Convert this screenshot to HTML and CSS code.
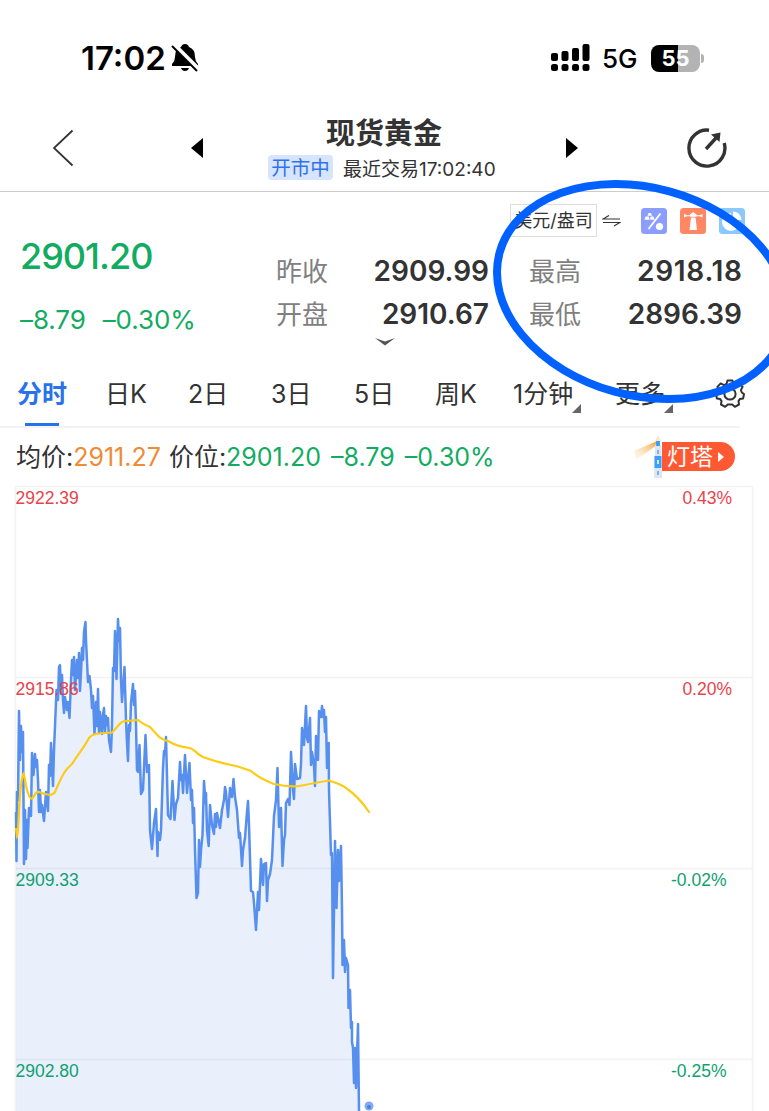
FILE: index.html
```html
<!DOCTYPE html>
<html lang="zh-CN">
<head>
    <meta charset="UTF-8">
    <meta name="viewport" content="width=device-width, initial-scale=1.0">
    <title>现货黄金</title>
    <link rel="stylesheet" href="styles.css">
</head>
<body>
    <div class="status">
        <span class="clock">17:02</span>
        <svg class="bell" width="28" height="30" viewBox="0 0 28 30">
            <path d="M10 4Q11 1 14 1t4 3q6 2 6 10 0 4 3 7v2H1v-2q3-3 3-7 0-8 6-10z"/>
            <path d="M10 25h8q-1 3-4 3t-4-3z"/>
            <path d="M2 1l26 26" stroke="#fff" stroke-width="5"/>
            <path d="M1 3l25 25" stroke="#000" stroke-width="2"/>
        </svg>
        <svg class="signal" width="39" height="28" viewBox="0 0 39 28">
            <rect x="0" y="9" width="7" height="8" rx="2"/>
            <rect x="10.500" y="7" width="7" height="10" rx="2"/>
            <rect x="21" y="4" width="7" height="13" rx="2"/>
            <rect x="31.500" y="0" width="7" height="17" rx="2"/>
            <rect x="0" y="20" width="7" height="7" rx="2.500"/>
            <rect x="10.500" y="20" width="7" height="7" rx="2.500"/>
            <rect x="21" y="20" width="7" height="7" rx="2.500"/>
            <rect x="31.500" y="20" width="7" height="7" rx="2.500"/>
        </svg>
        <span class="network">5G</span>
        <span class="battery">55</span>
        <span class="battery-tip"></span>
    </div>

    <header>
        <svg class="back" width="22" height="38" viewBox="0 0 22 38"><path d="M19.500 1.500L1 19l18.500 17.500" fill="none" stroke="#333" stroke-width="1.800"/></svg>
        <svg class="prev" width="12" height="20" viewBox="0 0 12 20"><path d="M12 0v20L0 10z"/></svg>
        <div class="heading">
            <h1>现货黄金</h1>
            <p><span class="badge">开市中</span><span class="last">最近交易17:02:40</span></p>
        </div>
        <svg class="next" width="12" height="20" viewBox="0 0 12 20"><path d="M0 0v20l12-10z"/></svg>
        <svg class="refresh" width="40" height="40" viewBox="0 0 40 40">
            <path d="M22 2.200A18 18 0 1 0 37.200 15" fill="none" stroke="#333" stroke-width="3.400"/>
            <path d="M19 21L29 10" stroke="#333" stroke-width="3.400"/>
            <path d="M24 6.500L33.500 4.500 32.500 14z" fill="#333"/>
        </svg>
    </header>

    <section class="quote">
        <div class="tools">
            <span class="unit">美元/盎司</span>
            <svg class="swap" width="19" height="12" viewBox="0 0 19 12"><path d="M18 4H1l6-3.500M1 7.500h17l-6 3.500" fill="none" stroke="#333" stroke-width="1.200"/></svg>
            <svg class="tool" width="26" height="26" viewBox="0 0 26 26">
                <rect width="26" height="26" rx="3.500" fill="#8b9eff"/>
                <path d="M7.500 21L19.500 5.500" stroke="#fff" stroke-width="1.800"/>
                <circle cx="18.500" cy="18.500" r="3.600" fill="#fff"/>
                <path d="M7.500 5h2.500l1 2.800H6.500zM4.500 8.600h3.400l.8 3.200H3.500zM9.500 8.600h3l1 3.200H9.300z" fill="#fff"/>
            </svg>
            <svg class="tool" width="26" height="26" viewBox="0 0 26 26">
                <rect width="26" height="26" rx="3.500" fill="#ff8763"/>
                <path d="M11 9.500h4.500l1.500 12.500H9.500zM10 6.500l3.200-2.500 3.300 2.500v2.200H10zM4 6v3.500l3-1.300h3V7.300H7zM22.500 6v3.500l-3-1.300h-3v-.9h3z" fill="#fff"/>
            </svg>
            <svg class="tool" width="26" height="26" viewBox="0 0 26 26">
                <rect width="26" height="26" rx="3.500" fill="#8bc8fc"/>
                <path d="M12 5v9h9a9 9 0 1 1-9-9z" fill="#fff"/>
                <path d="M14 3.500a8.500 8.500 0 0 1 8.500 8.500H14z" fill="#fff"/>
            </svg>
        </div>
        <div class="figures">
            <div class="price">
                <strong>2901.20</strong>
                <p><span>–8.79</span><span>–0.30%</span></p>
            </div>
            <dl>
                <dt>昨收</dt><dd>2909.99</dd>
                <dt>开盘</dt><dd>2910.67</dd>
            </dl>
            <dl>
                <dt>最高</dt><dd class="high">2918.18</dd>
                <dt>最低</dt><dd>2896.39</dd>
            </dl>
        </div>
        <svg class="expand" width="20" height="8" viewBox="0 0 20 8"><path d="M0 0l10 3.500L20 0 10 7.500z" fill="#555"/></svg>
    </section>

    <nav>
        <span class="active">分时</span>
        <span>日K</span>
        <span>2日</span>
        <span>3日</span>
        <span>5日</span>
        <span>周K</span>
        <span class="drop">1分钟</span>
        <span class="drop">更多</span>
        <svg class="gear" width="30" height="30" viewBox="0 0 30 30" fill="none" stroke="#333" stroke-width="2" stroke-linejoin="round">
            <path d="M12.500 1.500h5l1 3.500 2.500 1.100 3.300-1.700 3.300 3.500-1.700 3.200.9 2.400 2.200 1.500-.9 4.500-3.300.6-1.300 2 .5 3.400-4.200 2.300-2.600-2.300h-4.400l-2.600 2.300L6 25.500l.5-3.400-1.300-2-3.300-.6-.9-4.500 2.200-1.500.9-2.400-1.700-3.200 3.300-3.500L9 6.100 11.500 5z"/>
            <circle cx="15" cy="15" r="5.600"/>
        </svg>
    </nav>

    <div class="legend">
        <span>均价:</span><span class="orange">2911.27</span>
        <span class="label">价位:</span><span class="green">2901.20 –8.79 –0.30%</span>
        <div class="beacon">
            <svg width="28" height="44" viewBox="0 0 28 44">
                <defs>
                    <linearGradient id="beam" x1="1" y1="0" x2="0" y2="1">
                        <stop offset="0" stop-color="#f2a13a"/>
                        <stop offset="1" stop-color="#fff0dc" stop-opacity=".3"/>
                    </linearGradient>
                </defs>
                <path d="M23 6v4L2 25 0 16z" fill="url(#beam)"/>
                <path d="M24 0l3 6h-6z" fill="#fbe7c5"/>
                <path d="M21 10h6l1 33h-8z" fill="#dfe5f3"/>
                <path d="M22 6h4v5h-4zM20.500 21h7v12h-7z" fill="#3d9ff5"/>
                <path d="M24 15v4M24 36v4" stroke="#55a8ee" stroke-width="1.500"/>
                <path d="M24 25v4" stroke="#fff" stroke-width="1.500"/>
            </svg>
            <span class="pill">灯塔<svg width="6" height="10" viewBox="0 0 6 10"><path d="M0 0l6 5-6 5z" fill="#fff"/></svg></span>
        </div>
    </div>

    <svg class="chart" width="769" height="626" viewBox="0 485 769 626">
        <path class="area" d=""/>
        <g class="grid">
            <path d="M15.500 1111V486.500H752.500V1111"/>
            <path d="M16 677.500H752M16 868.500H752M16 1059.500H752"/>
        </g>
        <polyline class="line" points=""/>
        <g class="up">
            <text x="15.500" y="503.500">2922.39</text>
            <text x="15.500" y="694.500">2915.86</text>
            <text x="732" y="503.500" text-anchor="end">0.43%</text>
            <text x="732" y="694.500" text-anchor="end">0.20%</text>
        </g>
        <g class="down">
            <text x="15.500" y="885.500">2909.33</text>
            <text x="15.500" y="1076.500">2902.80</text>
            <text x="726.500" y="885.500" text-anchor="end">-0.02%</text>
            <text x="726.500" y="1076.500" text-anchor="end">-0.25%</text>
        </g>
        <path class="average" d="M16 829L17 836Q18 834 19 810C20 792 21 778 23.500 774Q25 778 26 786Q29 799 32 799C35 796 35 791 39 792Q43 794 50 795Q54 794 55 792C63 773 66 769 72 764C80 751 84 748 89 738Q92 734 99 733.500L112 732.500C118 727 120 720 128 721L138 720Q144 725 150 727C157 734 160 740 168 741Q178 747 190 748C196 750 196 754 203 757Q219 763 238 766.500L251 771Q260 779 274 784Q291 788 302 785.500Q320 782 329 780.500C336 783 341 784 346 788Q359 797 369 812"/>
        <circle cx="369" cy="1106" r="4.500" fill="#82aaf0"/>
        <circle cx="369" cy="1107" r="2" fill="#4583e8"/>
    </svg>

    <svg class="marker" width="769" height="420" viewBox="0 0 769 420">
        <ellipse cx="642" cy="291.500" rx="147.600" ry="103.900" transform="rotate(15.300 642 291.500)"/>
    </svg>

    <script>
        // Intraday prices as chart coordinates
        const points = `16,812 16.500,861 17,792 18,800 19,711 20,760 21,726 22,752 23,732 24,864 25,810 26,859
            27,820 27.500,848 29,808 31,816 32,753 33.500,775 35,754 36,767 37,760 38,780 39,812 40,790 41,812
            42,805 44,821 46,792 48,811 49,765 50,776 51,743 53,786 54,750 55,726 56.500,690 58,700 59,667
            60,665 61,694 62,675 63,700 64,713 65,697 67,710 68,702 69.500,718 71,680 72,660 73,675 74,657
            75,690 77,660 78,678 79,653 80,691 81,672 82,648 83,660 84,632 85.500,622 86,640 88,682 89.500,676
            91,690 92,708 93,696 94.500,734 96,702 97,726 98,689 99,733 100,712 102,734 103,715 104,708
            105,732 106,716 107,725 108,718 109,740 111,752 112,725 113,668 114,671 115,631 116.500,679
            118,619 119,641 120,628 121,680 122,702 124.500,667 126,720 127,743 128,761 129,725 130,731
            131,703 133,684 134,705 135,691 136,725 137,770 138,772 139.500,745 141,794 143,790 145.500,735
            147,772 149,765 150,830 152,849 154,823 156,809 157.500,856 158,832 160,840 161,830 163,768 164,751
            165,754 166,737 168,815 170.500,819 172.500,781 174.500,820 176,804 178,798 180,762 181,780 182,775
            183,793 185,755 187,793 189.500,763 191,800 192,790 193,823 194,808 195,850 196.500,898 198,893
            199,840 200,867 201,850 202.500,835 204,781 205.500,803 206,793 207,830 208.700,846 210,805
            212,825 214,834 215,814 216,827 217,813 220,828 222,810 224,800 225,787 226,792 228,817 230,788
            232,797 233.500,779 235,797 237,810 239,838 240,833 242,866 243,850 245,838 247,812 248,801
            249,825 251,891 253,892 254,903 256,930 258,892 259,910 261,859 263,885 264,864 266,863 267,901
            268,880 270,874 272,860 274,816 276,800 277.500,768 279,827 281,808 282.500,866 284,840 285,835
            286,803 288,799 289.500,805 291,752 293,790 294,799 295,764 297,779 300,778 301,764 302,728
            304,745 306,706 307,738 308,742 310,718 311,765 312,752 314,766 315,786 316,736 318,760 319,711
            321,717 322,706 323,717 324,710 325,732 326,717 327,768 328.700,743 329,790 331,855 332,853
            333,978 335,841 336.500,908 338,850 339,881 341,846 342,910 342.500,965 344,940 345,972 346,958
            348,965 348.500,1008 350,990 351,1028 352,1022 352,1042 353,1048 354,1083 355,1048 356,1088
            358,1024 359,1111`.trim().split(/\s+/);

        document.querySelector('.line').setAttribute('points', points.join(' '));
        document.querySelector('.area').setAttribute('d', 'M16 1111L' + points.join('L') + 'Z');
    </script>
</body>
</html>
```
FILE: styles.css
```css
* {
    box-sizing: border-box;
}
body {
    position: relative;
    width: 769px;
    height: 1111px;
    margin: 0;
    overflow: hidden;
    background-color: #fff;
    color: #333;
    font-family: Inter, "Noto Sans CJK SC", sans-serif;
}
h1, p, dl, dd {
    margin: 0;
}
span {
    white-space: nowrap;
}
svg {
    display: block;
    flex: none;
}
.status {
    display: flex;
    align-items: center;
    height: 116px;
    padding-left: 81px;
    color: #000;
}
.clock {
    width: 90px;
    font-size: 33px;
    font-weight: 600;
}
.signal {
    margin-left: 352px;
}
.network {
    width: 49px;
    margin-left: 12px;
    font-size: 26px;
    font-weight: 500;
}
.battery {
    width: 49px;
    height: 27px;
    border-radius: 8px;
    background: linear-gradient(90deg, #000 55%, #b3b3b3 55%);
    color: #fff;
    font-size: 22px;
    font-weight: 700;
    line-height: 27px;
    text-align: center;
}
.battery-tip {
    width: 3px;
    height: 9px;
    margin-left: 1px;
    border-radius: 0 4px 4px 0;
    background-color: #b3b3b3;
}
header {
    display: flex;
    height: 76px;
    padding-left: 53px;
    border-bottom: 1px solid #ccc;
}
.back {
    margin-top: 13px;
}
.prev {
    margin: 22px 0 0 116px;
}
.heading {
    width: 232px;
    margin-left: 65px;
}
h1 {
    height: 38px;
    padding-left: 58px;
    font-size: 29px;
    font-weight: 700;
    line-height: 35px;
}
.heading p {
    display: flex;
    align-items: center;
    height: 26px;
}
.badge {
    width: 65px;
    height: 25px;
    margin-right: 10px;
    border-radius: 4px;
    background-color: #d6e4fc;
    color: #2f73ea;
    font-size: 19.5px;
    line-height: 26px;
    text-align: center;
}
.last {
    font-size: 19px;
}
.next {
    margin: 22px 0 0 66px;
}
.refresh {
    margin: 12px 0 0 109px;
}
.quote {
    height: 170px;
}
.tools {
    display: flex;
    align-items: center;
    height: 57px;
    padding-left: 510px;
}
.unit {
    width: 87px;
    height: 33px;
    border: 1px solid #ddd;
    font-size: 18px;
    line-height: 32px;
    text-align: center;
}
.swap {
    margin: 0 20px 0 5px;
}
.tool {
    margin-right: 13px;
}
.figures {
    display: grid;
    grid-template-columns: 216px 213px 213px;
    column-gap: 40px;
    height: 88px;
    padding-left: 20px;
}
.price {
    margin-top: -18px;
    color: #12ab62;
}
.price strong {
    display: block;
    height: 73px;
    font-size: 36px;
    font-weight: 500;
    letter-spacing: -1px;
    line-height: 50px;
}
.price p {
    display: flex;
    gap: 17px;
    font-size: 26px;
    letter-spacing: -0.1px;
    line-height: 32px;
}
dl {
    display: grid;
    grid-template-columns: 60px 1fr;
    grid-auto-rows: 43px;
    line-height: 45px;
}
dt {
    color: #808080;
    font-size: 26px;
}
dd {
    font-size: 28px;
    font-weight: 600;
    text-align: right;
}
.high {
    letter-spacing: 0.7px;
    margin-right: -0.7px;
}
.expand {
    margin: 1px 0 0 375px;
}
nav {
    display: grid;
    grid-template-columns: 88px 83px 83px 83px 81px 78px 102px 99px 30px;
    align-items: center;
    width: 740px;
    height: 66px;
    padding-left: 17px;
    border-bottom: 2px solid #f3f3f3;
    font-size: 25px;
}
nav span {
    position: relative;
    justify-self: start;
    line-height: 64px;
}
.gear {
    margin-left: 1px;
}
.active {
    color: #2872ea;
    font-weight: 700;
}
.active::after {
    content: "";
    position: absolute;
    left: 8px;
    bottom: 0;
    width: 34px;
    height: 3px;
    background-color: #2872ea;
}
.drop::after {
    content: "";
    position: absolute;
    right: -8px;
    bottom: 13px;
    border-left: 9px solid transparent;
    border-bottom: 9px solid #666;
}
.legend {
    display: flex;
    align-items: center;
    height: 57px;
    padding-left: 16px;
    font-size: 25px;
    line-height: 36px;
}
.legend .label {
    margin-left: 8px;
}
.legend .orange {
    color: #ef8a35;
}
.legend .green {
    color: #12ab62;
    word-spacing: 3px;
}
.beacon {
    display: flex;
    align-items: center;
    margin: 0 34px 0 auto;
}
.pill {
    display: flex;
    align-items: center;
    gap: 5px;
    width: 73px;
    height: 29px;
    padding-left: 5px;
    border-radius: 0 15px 15px 0;
    background-color: #ff5933;
    color: #fff;
    font-size: 23px;
}
.chart text {
    font-family: "Liberation Sans", Arial, sans-serif;
    font-size: 17.5px;
}
.area {
    fill: #e9f0fc;
}
.grid {
    fill: none;
    stroke: #000;
    stroke-opacity: .05;
    stroke-width: 1.5;
}
.up {
    fill: #e8434c;
}
.down {
    fill: #12a070;
}
.line {
    fill: none;
    stroke: #568fee;
    stroke-width: 2.5;
    stroke-linejoin: round;
}
.average {
    fill: none;
    stroke: #fccb14;
    stroke-width: 2.2;
    stroke-linecap: round;
}
.marker {
    position: absolute;
    top: 0;
    left: 0;
    fill: none;
    stroke: #0061fe;
    stroke-width: 8;
}
```
